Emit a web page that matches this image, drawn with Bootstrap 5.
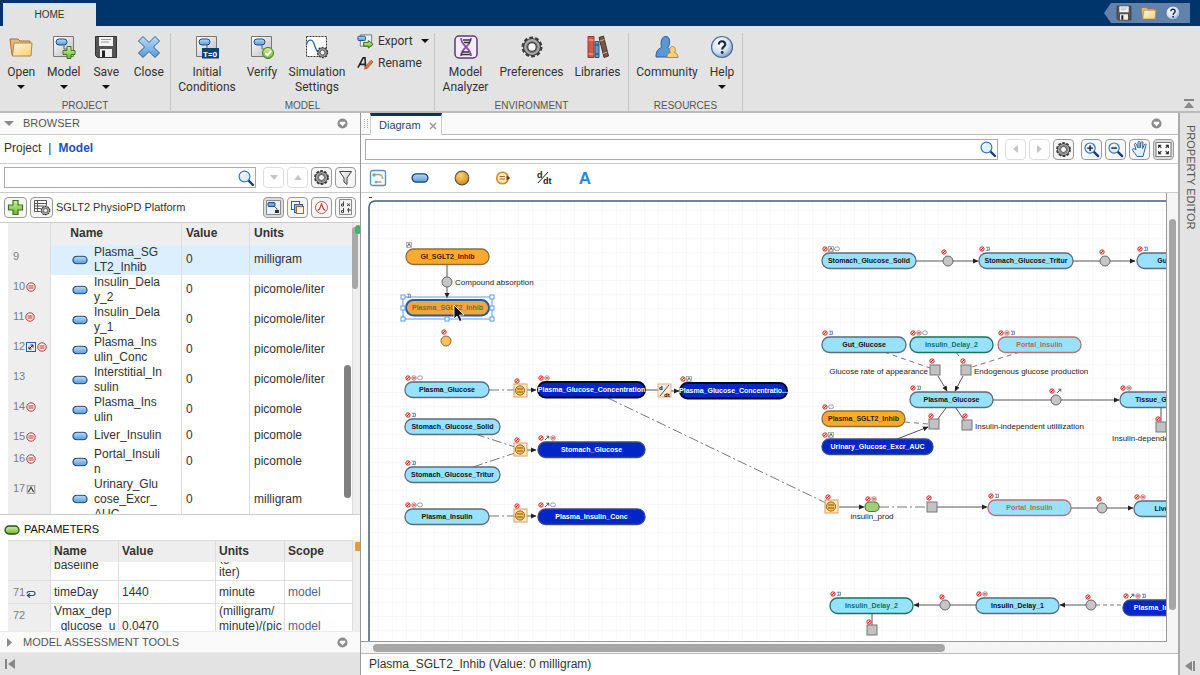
<!DOCTYPE html>
<html lang="en">
<head>
<meta charset="utf-8">
<meta name="viewport" content="width=device-width, initial-scale=1">
<title>Model Analyzer - SGLT2 PhysioPD Platform</title>
<link href="https://cdn.jsdelivr.net/npm/bootstrap@5.3.0/dist/css/bootstrap.min.css" rel="stylesheet">
<style>
:root{--line:#b4b4b4;--chrome:#e3e3e3}
body{font-family:"Liberation Sans",Arial,sans-serif;font-size:12px;line-height:15px;color:#333;background:#fff}
svg{display:block;flex:none}
button{font:inherit;color:inherit;background:none;border:0;padding:0}
a{color:inherit;text-decoration:none}
/* title bar */
.titlebar{height:26px;background:#00356b;padding:3px 10px 0 3px}
.hometab{width:93px;height:23px;background:var(--chrome);font-size:10px;line-height:19px}
.quick{height:20px;width:86px;background:#6183ab;clip-path:polygon(7px 0,100% 0,100% 100%,7px 100%,0 50%);padding-left:12px}
/* ribbon */
.ribbon{height:87px;background:var(--chrome);border-bottom:2px solid #bbb;font-family:Roboto,sans-serif}
.rgroup{border-right:1px solid #c4c4c4;margin-top:7px;height:78px}
.rgroup .tools{height:66px}
.rgroup .caption{font:10px/14px "Liberation Sans",sans-serif;color:#555;text-align:center;height:14px}
.rbtn{display:flex;flex-direction:column;align-items:center;padding-top:2px}
.rbtn svg.ico{margin-bottom:6px}
.caret{width:0;height:0;border:4px solid transparent;border-top-color:#111;border-bottom:0}
.rbtn .caret{margin-top:5px}
.rgroup .line{height:22px}
.rgroup .stack{margin-top:-3px}
/* left panel */
.browser{width:361px;border-right:1px solid #999}
.phead{height:22px;background:#fafafa;border-bottom:1px solid #ccc;font-size:11px;color:#555}
.prow{border-bottom:1px solid #ccc}
.btns{gap:3px}
.box{height:21px;border:1px solid #aaa;background:#fff}
.box input{border:0;outline:0;min-width:0;background:none;height:19px}
.sq{width:21px;height:21px;border:1px solid #999;border-radius:4px;background:#f6f6f6;display:flex;align-items:center;justify-content:center;flex:none}
.sq.w{width:23px}
.sq:disabled{border-color:#ddd;background:#fff}
.mtitle{font-size:11px}
.grid{table-layout:fixed;border-collapse:separate;border-spacing:0;width:345px}
.grid th{background:#eee;font-weight:700;height:22px;padding:0 4px;border-right:1px solid #ddd}
.grid td{padding:0 4px;border-right:1px solid #ddd;vertical-align:middle;word-break:break-all}
.grid td.num{background:#eee;color:#777f88;font-size:11px;vertical-align:top;padding:4px 0 0 5px;white-space:nowrap}
.grid td.num svg{display:inline-block;vertical-align:-2px;margin-left:1px}
.grid td.name{padding:0 0 0 21px;border-left:0}
.grid .pick td:not(.num){background:#dcefff}
.grid .pill{margin-right:6px}
.grid .nm{width:70px}
.species{flex:1 1 293px;min-height:0}
.gutter{width:8px;background:#eee}
.thumb{position:absolute;background:#808080;border-radius:4px}
.params{flex:0 0 91px}
.params td{border-bottom:1px solid #ddd}
.params td:not(.num),.params th{padding:0 0 0 3px}
.params .grid th{border-top:1px solid #ddd}
.params .body .grid{margin-top:-12px}
.params .scope{color:#56657f}
.foot{height:22px;background:var(--chrome)}
/* diagram panel */
.tabstrip{height:22px;background:#fafafa;border-bottom:1px solid #bbb}
.dtab{height:22px;border:1px solid #ccc;border-top:3px solid #00356b;border-bottom:0;background:#fff;color:#24466f;padding:0 4px 0 8px;font-size:11px}
.canvas{border-right:1px solid #999;border-bottom:1px solid #999}
.vbar{width:11px;background:#f5f5f5}
.hbar{height:12px;background:#f5f5f5;border-bottom:1px solid #bbb}
.vthumb,.hthumb{background:#a6a6a6;border-radius:4px}
.vthumb{width:7px;margin:26px 2px 32px 2px}
.hthumb{height:8px;margin:2px 0 0 12px;width:70%}
.side{width:22px;background:var(--chrome);border-left:2px solid #aaa;font-size:11px;color:#555}
.side .vert{writing-mode:vertical-rl}
#diagram text{font-family:"Liberation Sans",Arial,sans-serif}
#diagram .nt{font-size:7px;font-weight:700;text-anchor:middle}
#diagram .lt{font-size:8px;fill:#222}
</style>
</head>
<body class="d-flex flex-column vh-100 overflow-hidden">

<svg width="0" height="0" class="position-absolute" aria-hidden="true">
  <defs>
    <linearGradient id="gb" x1="0" y1="0" x2="0" y2="1"><stop offset="0" stop-color="#b9dcf8"/><stop offset="1" stop-color="#5a9ad6"/></linearGradient>
    <linearGradient id="gy" x1="0" y1="0" x2="1" y2="1"><stop offset="0" stop-color="#fff6d8"/><stop offset="1" stop-color="#f6cf74"/></linearGradient>
    <linearGradient id="gg" x1="0" y1="0" x2="1" y2="1"><stop offset="0" stop-color="#fff"/><stop offset="1" stop-color="#bcbcbc"/></linearGradient>
    <linearGradient id="gn" x1="0" y1="0" x2="0" y2="1"><stop offset="0" stop-color="#d2f29a"/><stop offset="1" stop-color="#6db33a"/></linearGradient>
    <radialGradient id="gh" cx=".4" cy=".35" r=".7"><stop offset="0" stop-color="#fff"/><stop offset=".6" stop-color="#cfe0f2"/><stop offset="1" stop-color="#6f93bd"/></radialGradient>
    <radialGradient id="go" cx=".4" cy=".3" r=".8"><stop offset="0" stop-color="#ffd36a"/><stop offset="1" stop-color="#c98216"/></radialGradient>
    <symbol id="folder" viewBox="0 0 24 24"><path d="M1 4h8l2 2h10v14H3z" fill="#e9b97a" stroke="#a8713a"/><path d="M5 8h18l-1 13H3.500z" fill="url(#gy)" stroke="#b98442"/></symbol>
    <symbol id="floppy" viewBox="0 0 24 24"><path d="M1.500 1.500h21v21h-19l-2-2z" fill="#555" stroke="#333"/><path d="M5 2h14v9H5z" fill="#f5f5f5"/><path d="M7 4.500h10M7 7h8" stroke="#999"/><path d="M6 14h12v8H6z" fill="#eee"/><path d="M8 15.500h3V22H8z" fill="#222"/></symbol>
    <symbol id="cross" viewBox="0 0 24 24"><path d="M6 1.500l6 6 6-6 4.500 4.500-6 6 6 6-4.500 4.500-6-6-6 6L1.500 18l6-6-6-6z" fill="url(#gb)" stroke="#2f5f95" stroke-linejoin="round"/></symbol>
    <symbol id="page" viewBox="0 0 24 24"><path d="M1.500 1.500h20v20h-20z" fill="url(#gg)" stroke="#777"/><path d="M12 9v5h3" fill="none" stroke="#666"/><rect x="4" y="4" width="11" height="6" rx="3" fill="url(#gb)" stroke="#1c4f8c"/></symbol>
    <symbol id="gear" viewBox="0 0 24 24"><g fill="none"><circle cx="12" cy="12" r="9" stroke="#3c3c3c" stroke-width="3" stroke-dasharray="3.600 2.055"/><circle cx="12" cy="12" r="7" stroke="#3c3c3c" stroke-width="4"/><circle cx="12" cy="12" r="6.700" stroke="#a8a8a8" stroke-width="2.400"/><circle cx="12" cy="12" r="4.300" fill="#f4f4f4" stroke="#3c3c3c" stroke-width="1.300"/></g></symbol>
    <symbol id="help" viewBox="0 0 24 24"><circle cx="12" cy="12" r="10.500" fill="url(#gh)" stroke="#506f94" stroke-width="1.200"/><path d="M8.800 9.500c0-4.500 6.600-4.200 6.400 0c0 2.300-3 2.200-3 5" fill="none" stroke="#1b2740" stroke-width="2.200"/><circle cx="12.200" cy="17.500" r="1.400" fill="#1b2740"/></symbol>
    <symbol id="lens" viewBox="0 0 18 18"><path d="M11 11l5 5" stroke="#173a70" stroke-width="2.400" stroke-linecap="round"/><circle cx="7.500" cy="7.500" r="5.400" fill="#dff0fb" stroke="#3973b5" stroke-width="1.200"/><path d="M4.500 7a3 3 0 0 1 3-3" fill="none" stroke="#fff" stroke-width="1.500"/></symbol>
    <symbol id="pill" viewBox="0 0 17 10"><rect x="1" y="1" width="15" height="8" rx="4" fill="url(#gb)" stroke="#1c4470" stroke-width="1.200"/></symbol>
    <symbol id="menu" viewBox="0 0 10 10"><circle cx="5" cy="5" r="4.600" fill="#8c8c8c"/><path d="M2.500 3.500h5v1.300L5 7.600 2.500 4.800z" fill="#fff"/></symbol>
    <symbol id="eq" viewBox="0 0 10 10"><circle cx="5" cy="5" r="4.200" fill="#fff5f2" stroke="#b5302c"/><path d="M2.500 4h5M2.500 6h5" stroke="#b5302c"/></symbol>
    <!-- badges above diagram blocks -->
    <symbol id="b-n" viewBox="0 0 6 6"><circle cx="3" cy="3" r="2.200" fill="#fbd5d2" stroke="#d8302b"/><path d="M1.500 4.500l3-3" stroke="#d8302b"/></symbol>
    <symbol id="b-e" viewBox="0 0 6 6"><circle cx="3" cy="3" r="2.300" fill="#fff" stroke="#c46a68" stroke-width=".8"/><path d="M1.500 2.400h3M1.500 3.700h3" stroke="#a03030" stroke-width=".7"/></symbol>
    <symbol id="b-r" viewBox="0 0 6 6"><path d="M1 1.200h3.500v3.200H1M2.700 1v4" fill="none" stroke="#6577ac" stroke-width=".8"/></symbol>
    <symbol id="b-l" viewBox="0 0 6 6"><rect x=".6" y="1" width="4.800" height="3.600" rx="1.600" fill="#fff" stroke="#7a86a8" stroke-width=".8"/></symbol>
    <symbol id="b-a" viewBox="0 0 6 6"><rect x=".5" y=".5" width="5" height="5" fill="#eee" stroke="#888" stroke-width=".6"/><path d="M1.300 4.600L3 1.500l1.700 3.100" fill="none" stroke="#444" stroke-width=".8"/></symbol>
    <symbol id="b-s" viewBox="0 0 6 6"><path d="M1 5l3.500-3.500M2.500 1.200h2.300v2.300" fill="none" stroke="#345" stroke-width=".9"/></symbol>
  </defs>
</svg>

<header class="titlebar d-flex justify-content-between">
  <button class="hometab">HOME</button>
  <div class="quick d-flex align-items-center gap-2">
    <button aria-label="Save"><svg width="16" height="16"><use href="#floppy"/></svg></button>
    <button aria-label="Open"><svg width="17" height="16"><use href="#folder"/></svg></button>
    <button aria-label="Help"><svg width="16" height="16"><use href="#help"/></svg></button>
  </div>
</header>

<nav class="ribbon d-flex" aria-label="Home tools">
  <section class="rgroup" style="flex:0 0 171px">
    <div class="tools d-flex">
      <button class="rbtn col-3"><svg class="ico" width="24" height="24"><use href="#folder"/></svg>Open<i class="caret"></i></button>
      <button class="rbtn col-3"><svg class="ico" width="24" height="24" viewBox="0 0 24 24"><use href="#page"/><path d="M15 11.500h4v4h4v4h-4v4h-4v-4h-4v-4h4z" fill="url(#gn)" stroke="#3d7a1e"/></svg>Model<i class="caret"></i></button>
      <button class="rbtn col-3"><svg class="ico" width="24" height="24"><use href="#floppy"/></svg>Save<i class="caret"></i></button>
      <button class="rbtn col-3"><svg class="ico" width="24" height="24"><use href="#cross"/></svg>Close</button>
    </div>
    <div class="caption">PROJECT</div>
  </section>
  <section class="rgroup" style="flex:0 0 264px">
    <div class="tools d-flex">
      <button class="rbtn" style="width:72px"><svg class="ico" width="24" height="24" viewBox="0 0 24 24"><use href="#page"/><rect x="7" y="13" width="17" height="10.500" fill="#0e4277"/><text x="8" y="21.500" font-size="8" font-weight="700" fill="#fff">T=0</text></svg>Initial<br>Conditions</button>
      <button class="rbtn" style="width:38px"><svg class="ico" width="24" height="24" viewBox="0 0 24 24"><use href="#page"/><circle cx="18" cy="18" r="5.500" fill="url(#gn)" stroke="#3d7a1e"/><path d="M15.300 18l2.200 2.300 3.500-4.500" fill="none" stroke="#fff" stroke-width="2"/></svg>Verify</button>
      <button class="rbtn" style="width:72px"><svg class="ico" width="24" height="24" viewBox="0 0 24 24"><path d="M1.500 1.500h20v20h-20z" fill="#fff" stroke="#333" stroke-dasharray="2 1"/><path d="M1.500 10c1-6 6-7 8 0s4 9 12 7" fill="none" stroke="#2a66a8" stroke-width="1.300"/><svg x="11" y="11" width="13" height="13"><use href="#gear"/></svg></svg>Simulation<br>Settings</button>
      <div class="ps-1 stack">
        <button class="line d-flex align-items-center"><svg width="17" height="16" viewBox="0 0 18 16" class="me-1"><path d="M3.500 1.500h12v12h-12z" fill="#eee" stroke="#777"/><rect x="1" y="3" width="8" height="4.500" rx="1" fill="url(#gb)" stroke="#1c4f8c"/><path d="M7 9.500h5v-2l5 4-5 4v-2H7z" fill="url(#gn)" stroke="#2f6a1a"/></svg>Export<i class="caret ms-2"></i></button>
        <button class="line d-flex align-items-center"><svg width="17" height="16" viewBox="0 0 18 16" class="me-1"><path d="M1 13L6.500 2.500h2L9 12.500M3.500 9.500H9" fill="none" stroke="#222" stroke-width="1.700"/><path d="M8 14.500l1-3 6-6.500 2 2-6 6.500z" fill="#e07a35" stroke="#8a4019" stroke-width=".7"/></svg>Rename</button>
      </div>
    </div>
    <div class="caption">MODEL</div>
  </section>
  <section class="rgroup" style="flex:0 0 194px">
    <div class="tools d-flex">
      <button class="rbtn" style="width:61px"><svg class="ico" width="24" height="24" viewBox="0 0 24 24"><rect x="1" y="1" width="22" height="22" rx="4" fill="#f4ecf8" stroke="#5d3a78" stroke-width="1.500"/><path d="M7 3c0 8 10 10 10 18M17 3c0 8-10 10-10 18" fill="none" stroke="#8c50a6" stroke-width="1.800"/><path d="M9 5h8M10 7.500h6M8 17h7M7 19.500h9" stroke="#333" stroke-width="1.300"/></svg>Model<br>Analyzer</button>
      <button class="rbtn" style="width:71px"><svg class="ico" width="24" height="24"><use href="#gear"/></svg>Preferences</button>
      <button class="rbtn" style="width:61px"><svg class="ico" width="24" height="24" viewBox="0 0 24 24"><path d="M2 1.500h6v21H2z" fill="#cf5a4b" stroke="#a13328"/><path d="M2.500 5h5M2.500 19h5" stroke="#f3b4a8"/><path d="M9 6.500h4v16H9z" fill="#5d9ac4" stroke="#285b82"/><path d="M9 10h4M9 19h4" stroke="#1d3e5c"/><path d="M13 2.500l4.500-1.500 5 20-4.500 1.500z" fill="#76564a" stroke="#4d352c"/><path d="M14 6l4.500-1.500M17 18.500l4.500-1.500" stroke="#c7a99c"/></svg>Libraries</button>
    </div>
    <div class="caption">ENVIRONMENT</div>
  </section>
  <section class="rgroup" style="flex:0 0 114px">
    <div class="tools d-flex">
      <button class="rbtn" style="width:76px"><svg class="ico" width="24" height="24" viewBox="0 0 24 24"><path d="M1 22c0-6 2-8 5.500-9.500C6 10 5 2 10.500 1.500S15 10 13 12.500C15 14 16 17 15.500 22z" fill="#5b97d3" stroke="#2a5c96"/><path d="M12 22.500c0-3 1-4 3.500-5-1.500-2-1-6 2-6s3.500 4 2 6c2.500 1 3.500 2 3.500 5z" fill="#fad27a" stroke="#b8842f"/></svg>Community</button>
      <button class="rbtn" style="width:34px"><svg class="ico" width="24" height="24"><use href="#help"/></svg>Help<i class="caret"></i></button>
    </div>
    <div class="caption">RESOURCES</div>
  </section>
  <button class="ms-auto align-self-end me-1" aria-label="Collapse ribbon"><svg width="14" height="12" viewBox="0 0 14 12"><path d="M2 1h10" stroke="#888" stroke-width="2"/><path d="M7 3l5 6H2z" fill="#888"/></svg></button>
</nav>

<div class="d-flex flex-grow-1" style="min-height:0">

  <aside class="browser d-flex flex-column flex-shrink-0">
    <div class="phead d-flex align-items-center px-1">
      <svg width="11" height="7" class="me-2"><path d="M0 1h10L5 6z" fill="#888"/></svg><span class="flex-grow-1">BROWSER</span><svg width="11" height="11" class="me-2"><use href="#menu"/></svg>
    </div>
    <div class="prow d-flex align-items-center px-1" style="flex:0 0 29px;gap:7px"><a href="#">Project</a><span>|</span><a href="#" class="fw-bold" style="color:#2550b8">Model</a></div>
    <div class="prow btns d-flex align-items-center px-1" style="flex:0 0 29px">
      <label class="box d-flex align-items-center flex-grow-1 me-1"><input class="flex-grow-1" aria-label="Search model"><svg width="18" height="18"><use href="#lens"/></svg></label>
      <button class="sq" disabled aria-label="Next"><svg width="8" height="5"><path d="M0 0h8L4 5z" fill="#c4c4c4"/></svg></button>
      <button class="sq" disabled aria-label="Previous"><svg width="8" height="5"><path d="M0 5h8L4 0z" fill="#c4c4c4"/></svg></button>
      <button class="sq" aria-label="Options"><svg width="17" height="17"><use href="#gear"/></svg></button>
      <button class="sq" aria-label="Filter"><svg width="15" height="16" viewBox="0 0 15 16"><path d="M1.500 1.500h12L9 8v6.500L6 12V8z" fill="url(#gg)" stroke="#444"/></svg></button>
    </div>
    <div class="prow btns d-flex align-items-center px-1" style="flex:0 0 30px">
      <button class="sq w" aria-label="Add"><svg width="17" height="17" viewBox="0 0 17 17"><path d="M6 1.500h5V6h4.500v5H11v4.500H6V11H1.500V6H6z" fill="url(#gn)" stroke="#39771b" stroke-width="1.200"/></svg></button>
      <button class="sq w" aria-label="Table settings"><svg width="18" height="17" viewBox="0 0 18 17"><path d="M1.500 1.500h12v11h-12zM1.500 4.500h12M1.500 7h12M1.500 9.500h12M4.500 1.500v11" fill="#fff" stroke="#555"/><svg x="7" y="6" width="11" height="11"><circle cx="5.500" cy="5.500" r="5" fill="#f6f6f6"/><use href="#gear"/></svg></svg></button>
      <span class="mtitle flex-grow-1">SGLT2 PhysioPD Platform</span>
      <button class="sq" style="background:#ddd" aria-label="Diagram view"><svg width="15" height="15" viewBox="0 0 15 15"><path d="M.5.500h14v14H.5z" fill="#eaf1f8" stroke="#888"/><path d="M8 6l3 3v2" fill="none" stroke="#555"/><rect x="2" y="2.500" width="7" height="4" rx="1" fill="#6fa8de" stroke="#1c4f8c"/><rect x="9" y="10" width="4" height="3" fill="#333"/></svg></button>
      <button class="sq" aria-label="Copies"><svg width="15" height="15" viewBox="0 0 15 15"><rect x="1.500" y="1.500" width="8" height="8" fill="#fff" stroke="#2b62a5"/><rect x="4.500" y="4.500" width="8" height="8" fill="#8fb7e2" stroke="#2b62a5"/><rect x="6.500" y="6.500" width="7" height="7" fill="#fff3dc" stroke="#a56b2b"/></svg></button>
      <button class="sq" aria-label="Plot"><svg width="15" height="15" viewBox="0 0 15 15"><circle cx="7.500" cy="7.500" r="6" fill="#fff" stroke="#b55a56"/><path d="M3.500 10.500l2-1.500 2-5 2 5 2 1.500" fill="none" stroke="#c03a36" stroke-width="1.200"/></svg></button>
      <button class="sq" aria-label="Equations"><svg width="15" height="16" viewBox="0 0 15 16"><path d="M1.500.500h12v15h-12z" fill="#f2f2f2" stroke="#888"/><path d="M5.500 2.500v4.500h-2v-2h2M9 4.500l3 2.500M12 4.500L9 7M5.500 9v4.500h-2v-2h2M9 11h4M10.500 9v4.500" fill="none" stroke="#444"/></svg></button>
    </div>

    <div class="species d-flex position-relative overflow-hidden ps-2 prow">
      <table class="grid align-self-start">
        <colgroup><col style="width:43px"><col style="width:131px"><col style="width:68px"><col style="width:103px"></colgroup>
        <thead><tr><th></th><th class="ps-3">&nbsp;Name</th><th>Value</th><th>Units</th></tr></thead>
        <tbody id="species"></tbody>
      </table>
      <div class="gutter flex-grow-1"></div>
      <i class="thumb" style="left:344px;top:142px;width:7px;height:133px"></i>
      <i class="thumb" style="left:352px;top:4px;width:6px;height:62px;background:#a8a8a8"></i>
      <i class="thumb" style="left:355px;top:2px;width:6px;height:9px;background:#3fb56c"></i>
    </div>

    <div class="d-flex align-items-center px-1" style="flex:0 0 25px;padding-top:4px;font-size:11px;color:#111">
      <svg width="16" height="10" viewBox="0 0 16 10"><rect x="1" y="1" width="14" height="8" rx="4" fill="url(#gn)" stroke="#2c4c1f" stroke-width="1.300"/></svg><span class="ms-1">PARAMETERS</span>
    </div>
    <div class="params d-flex position-relative overflow-hidden ps-2">
      <div class="d-flex flex-column">
        <table class="grid">
          <colgroup><col style="width:43px"><col style="width:68px"><col style="width:97px"><col style="width:69px"><col style="width:68px"></colgroup>
          <thead><tr><th></th><th>Name</th><th>Value</th><th>Units</th><th>Scope</th></tr></thead>
        </table>
        <div class="body overflow-hidden">
          <table class="grid">
            <colgroup><col style="width:43px"><col style="width:68px"><col style="width:97px"><col style="width:69px"><col style="width:68px"></colgroup>
            <tbody>
              <tr><td class="num"></td><td>baseline</td><td></td><td class="text-nowrap">(gram/decil<br>iter)</td><td></td></tr>
              <tr style="height:23px"><td class="num">71<svg width="10" height="8" viewBox="0 0 10 8"><path d="M3 1.500h4a2 2 0 0 1 0 4H2M4 3.500l-2.500 2L4 7.500M3 1.500a2 2 0 0 0-2 2" fill="none" stroke="#334a78" stroke-width="1.200"/></svg></td><td>timeDay</td><td>1440</td><td>minute</td><td class="scope">model</td></tr>
              <tr><td class="num">72</td><td class="text-nowrap overflow-hidden">Vmax_dep<br>_glucose_u<br>ptake</td><td>0.0470</td><td class="text-nowrap">(milligram/<br>minute)/(pic<br>omole)</td><td class="scope">model</td></tr>
            </tbody>
          </table>
        </div>
      </div>
      <div class="gutter flex-grow-1"></div>
      <i class="thumb" style="left:355px;top:2px;width:6px;height:9px;background:#f09a2c;border-radius:1px"></i>
    </div>
    <div class="phead d-flex align-items-center px-1 border-top border-secondary-subtle">
      <svg width="11" height="9" class="me-2"><path d="M3 0l5 4.500L3 9z" fill="#888"/></svg><span class="flex-grow-1">MODEL ASSESSMENT TOOLS</span><svg width="11" height="11" class="me-2"><use href="#menu"/></svg>
    </div>
    <div class="foot d-flex align-items-center ps-1"><button aria-label="Collapse browser"><svg width="12" height="10"><path d="M2 0v10" stroke="#888" stroke-width="2"/><path d="M11 0v10L4 5z" fill="#888"/></svg></button></div>
  </aside>

  <main class="d-flex flex-column flex-grow-1" style="min-width:0">
    <div class="tabstrip d-flex align-items-start">
      <svg width="9" height="20"><path d="M3.500 6v9M6.500 6v9" stroke="#aaa" stroke-dasharray="1 1"/></svg>
      <button class="dtab d-flex align-items-center">Diagram<svg width="8" height="8" class="ms-2"><path d="M1 1l6 6M7 1L1 7" stroke="#999" stroke-width="1.500"/></svg></button>
      <svg width="11" height="11" class="ms-auto align-self-center me-3"><use href="#menu"/></svg>
    </div>
    <div class="prow btns d-flex align-items-center px-1" style="flex:0 0 29px">
      <label class="box d-flex align-items-center flex-grow-1 me-1"><input class="flex-grow-1" aria-label="Search diagram"><svg width="18" height="18"><use href="#lens"/></svg></label>
      <button class="sq" disabled aria-label="Back"><svg width="5" height="8"><path d="M5 0v8L0 4z" fill="#c4c4c4"/></svg></button>
      <button class="sq" disabled aria-label="Forward"><svg width="5" height="8"><path d="M0 0v8l5-4z" fill="#c4c4c4"/></svg></button>
      <button class="sq me-1" aria-label="Diagram options"><svg width="17" height="17"><use href="#gear"/></svg></button>
      <button class="sq" aria-label="Zoom in"><svg width="17" height="17" viewBox="0 0 18 18"><use href="#lens"/><path d="M4.500 7.500h6M7.500 4.500v6" stroke="#123" stroke-width="1.500"/></svg></button>
      <button class="sq" aria-label="Zoom out"><svg width="17" height="17" viewBox="0 0 18 18"><use href="#lens"/><path d="M4.500 7.500h6" stroke="#123" stroke-width="1.500"/></svg></button>
      <button class="sq" aria-label="Pan"><svg width="18" height="18" viewBox="0 0 18 18"><path d="M6 16.500C4 13 1.500 11 1.500 9.500s2-1 3.500.5L3.500 4.500c0-1.500 1.500-1.500 2 0L7 8V2.500c0-1.500 2-1.500 2 0V8l1-5.500c.5-1.500 2-1 2 .5L11.500 8.500l2-4c1-1.200 2-.3 1.500 1l-2 7-1 4z" fill="#e4f1fc" stroke="#33608f"/></svg></button>
      <button class="sq" style="background:#ddd" aria-label="Fit to view"><svg width="17" height="15" viewBox="0 0 15 14"><path d="M.5.500h14v13H.5z" fill="#fff" stroke="#777"/><path d="M3 5.500V3h2.500M3 3l2.500 2.500M9.500 3H12v2.500M12 3L9.500 5.500M3 8.500V11h2.500M3 11l2.500-2.500M12 8.500V11H9.500M12 11L9.500 8.500" fill="none" stroke="#222"/></svg></button>
    </div>
    <div class="prow d-flex align-items-center px-2" style="flex:0 0 29px;gap:24px">
      <button aria-label="Compartment"><svg width="18" height="18" viewBox="0 0 18 18"><rect x="1.500" y="1.500" width="15" height="15" rx="2" fill="#f3f9fd" stroke="#5f8fb3" stroke-width="1.300"/><path d="M6 5.500h4a3.500 3.500 0 0 1 3.500 3.500v1M12.500 13H8" fill="none" stroke="#a9a78a" stroke-width="1.500"/><circle cx="5" cy="6" r="1.700" fill="#6da6d0"/><circle cx="7" cy="13" r="1.300" fill="#6da6d0"/></svg></button>
      <button aria-label="Species"><svg width="18" height="12" viewBox="0 0 17 10"><use href="#pill"/></svg></button>
      <button aria-label="Reaction"><svg width="18" height="18" viewBox="0 0 18 18"><circle cx="9" cy="9" r="6.800" fill="url(#go)" stroke="#555" stroke-width="1.200"/></svg></button>
      <button aria-label="Rule"><svg width="16" height="16" viewBox="0 0 16 16"><circle cx="7.500" cy="8" r="5.800" fill="#fdebc4" stroke="#cf8a2a" stroke-width="1.500"/><path d="M4.500 6.500h5.500M4.500 9h5.500" stroke="#a56a1c"/><path d="M11.500 5.500L15.500 8l-4 2.500z" fill="#5d4012"/></svg></button>
      <button aria-label="Rate rule"><svg width="18" height="18" viewBox="0 0 18 18"><path d="M3 14L13 3" stroke="#222"/><text x="2" y="8.500" font-size="9" font-weight="700" fill="#222">d</text><text x="8" y="15" font-size="9" font-weight="700" fill="#222">dt</text></svg></button>
      <button aria-label="Annotation" class="fw-bold" style="width:16px;font-size:17px;color:#1f8ae6">A</button>
    </div>
    <div class="d-flex flex-grow-1" style="min-height:0">
      <div class="canvas flex-grow-1 overflow-hidden" style="min-width:0">
        <svg id="diagram" width="100%" height="100%" role="img" aria-label="Model diagram"></svg>
      </div>
      <div class="vbar d-flex"><div class="vthumb flex-grow-1"></div></div>
    </div>
    <div class="hbar"><div class="hthumb"></div></div>
    <div class="d-flex align-items-center px-2" style="flex:0 0 21px">Plasma_SGLT2_Inhib (Value: 0 milligram)</div>
  </main>

  <aside class="side d-flex flex-column align-items-center justify-content-between pt-2 pb-1">
    <button class="vert mt-1">PROPERTY EDITOR</button>
    <button aria-label="Expand property editor"><svg width="12" height="10"><path d="M10 0v10" stroke="#888" stroke-width="2"/><path d="M8 0v10L1 5z" fill="#888"/></svg></button>
  </aside>
</div>

<script src="https://cdn.jsdelivr.net/npm/bootstrap@5.3.0/dist/js/bootstrap.bundle.min.js"></script>
<script>
// Species table: number, flag icons, name lines, units, row height
const eq = '<svg width="10" height="10"><use href="#eq"/></svg>';
const an = '<svg width="10" height="9"><use href="#b-a"/></svg>';
const sw = '<svg width="10" height="10" viewBox="0 0 10 10"><rect x=".5" y=".5" width="9" height="9" fill="#e6effa" stroke="#2b5ba0"/><path d="M3 7l4-4M4.500 3H7v2.500M3 4.500V7h2.500" fill="none" stroke="#222"/></svg>';
const species = [
  [9,'','Plasma_SG<br>LT2_Inhib','milligram',30],
  [10,eq,'Insulin_Dela<br>y_2','picomole/liter',30],
  [11,eq,'Insulin_Dela<br>y_1','picomole/liter',30],
  [12,sw+eq,'Plasma_Ins<br>ulin_Conc','picomole/liter',30],
  [13,'','Interstitial_In<br>sulin','picomole/liter',30],
  [14,eq,'Plasma_Ins<br>ulin','picomole',30],
  [15,eq,'Liver_Insulin','picomole',22],
  [16,eq,'Portal_Insuli<br>n','picomole',30],
  [17,an,'Urinary_Glu<br>cose_Excr_<br>AUC','milligram',45]];
document.getElementById('species').innerHTML = species.map((r, i) =>
  `<tr class="${i ? '' : 'pick'}" style="height:${r[4]}px"><td class="num">${r[0]}${r[1]}</td><td class="name"><div class="d-flex align-items-center"><svg class="pill" width="16" height="10" viewBox="0 0 17 10"><use href="#pill"/></svg><span class="nm text-nowrap">${r[2]}</span></div></td><td>0</td><td>${r[3]}</td></tr>`).join('');

// Diagram model, in window coordinates of the block canvas
const C = {cyan:['#99e2ff','#5c6b7a','#111'], navy:['#0026c8','#3c4a86','#fff'], dark:['#0026c8','#00072e','#fff'],
  amber:['#ffa92e','#86703f','#33220a'], sel:['#f3a63b','#2458a8','#6d6a5e'], green:['#99e2ff','#16745c','#0f7658'], rose:['#99e2ff','#bd6f6d','#b96558']};
const nodes = [
  [406,249,83,'GI_SGLT2_Inhib','amber','a'], [406,300,83,'Plasma_SGLT2_Inhib','sel','r'],
  [405,382,84,'Plasma_Glucose','cyan','nel'], [538,382,107,'Plasma_Glucose_Concentration','dark','ne'],
  [680,383,107,'Plasma_Glucose_Concentratio...','dark','na'],
  [405,419,95,'Stomach_Glucose_Solid','cyan','nr'], [405,467,95,'Stomach_Glucose_Tritur','cyan','nr'],
  [538,442,107,'Stomach_Glucose','navy','nse'], [405,509,84,'Plasma_Insulin','cyan','nel'],
  [538,509,107,'Plasma_Insulin_Conc','navy','nsl'],
  [822,253,94,'Stomach_Glucose_Solid','cyan','nal'], [979,253,94,'Stomach_Glucose_Tritur','cyan','nr'],
  [1137,253,84,'Gut_Glucose','cyan','nr'], [822,337,84,'Gut_Glucose','cyan','nr'],
  [910,337,83,'Insulin_Delay_2','green','nel'], [998,337,83,'Portal_Insulin','rose','ner'],
  [910,392,83,'Plasma_Glucose','cyan','nr'], [1120,392,84,'Tissue_Glucose','cyan','ne'],
  [822,411,83,'Plasma_SGLT2_Inhib','amber','nl'], [822,439,111,'Urinary_Glucose_Excr_AUC','navy','na'],
  [988,500,83,'Portal_Insulin','rose','nr'], [1134,501,84,'Liver_Insulin','cyan','ne'],
  [830,598,83,'Insulin_Delay_2','green','nr'], [976,598,83,'Insulin_Delay_1','cyan','ne'],
  [1123,600,94,'Plasma_Insulin_Conc','navy','nser']];
// x1 y1 x2 y2, arrow, dash
const D1 = '10 3 2 3', D2 = '5 4';
const edges = [[447,265,447,298,1],[489,390,514,390,0,D1],[527,390,536,390,1],[645,390,658,390],[671,391,679,391,1],
  [475,434,515,447,0,D1],[473,467,515,453,0,D1],[527,450,536,450,1],[489,516,514,516,0,D1],[527,516,536,516,1],
  [608,398,826,503,0,D1],[916,261,943,261],[952,261,978,261,1],[1073,261,1100,261],[1110,261,1135,261,1],
  [884,352,930,368,0,D2],[956,352,966,366,0,D2],[1020,352,972,367,0,D2],[938,376,947,391,1],[963,376,955,391,1],
  [993,400,1051,400],[1061,400,1119,400,1],[946,408,937,420],[956,408,964,420],[905,422,928,424,0,D2],[897,439,928,427,1],
  [1161,408,1161,422],[839,507,864,507,1],[879,507,926,507,0,D1],[937,507,987,507,1],[1071,508,1097,508],[1107,508,1133,508,1],
  [940,605,914,605,1],[949,605,976,605],[1086,605,1060,605,1],[1096,605,1123,605,0,'4 3'],[872,614,872,625]];
const circles = [[447,282],[948,261,944,252],[1105,261,1102,252],[1056,400,1052,391],[1102,508,1099,499],[945,605,942,597],[1091,605,1088,597]];
const squares = [[935,370,932,361],[966,370,963,361],[934,424,931,416],[967,425,965,416],[1161,427,1158,419],[932,507,929,498],[872,630,869,622]];
const rules = [[521,391],[521,450],[521,516],[832,507]];
const labels = [[455,285,'Compound absorption'],[928,374,'Glucose rate of appearance','end'],[974,374,'Endogenous glucose production'],
  [975,429,'Insulin-independent utililization'],[1112,441,'Insulin-dependent utilization'],[872,519,'insulin_prod','middle']];
const badge = (x, y, k) => `<use href="#b-${k}" x="${x - 3}" y="${y - 3}" width="6" height="6"/>`;

let s = `<defs><pattern id="gridp" width="14" height="14" patternUnits="userSpaceOnUse"><path d="M14 0H0V14" fill="none" stroke="#eff1f4"/></pattern>
<marker id="arr" markerUnits="userSpaceOnUse" markerWidth="6" markerHeight="6" refX="5" refY="3" orient="auto"><path d="M0 .500L5.500 3L0 5.500z" fill="#222"/></marker></defs>
<g transform="translate(-361 -193)"><rect x="369" y="201" width="3000" height="3000" rx="6" fill="url(#gridp)" stroke="#415d7d" stroke-width="1.500"/><path d="M369 197.500h3" stroke="#345"/>`;
for (const [a, b, c, d, arrow, dash] of edges)
  s += `<path d="M${a} ${b}L${c} ${d}" stroke="${dash ? '#777' : '#555'}" fill="none"${arrow ? ' marker-end="url(#arr)"' : ''}${dash ? ` stroke-dasharray="${dash}"` : ''}/>`;
for (const [x, y, w, t, c, b] of nodes) {
  const [fill, line, ink] = C[c];
  s += `<rect x="${x}" y="${y}" width="${w}" height="15.500" rx="7.500" fill="${fill}" stroke="${line}" stroke-width="${c === 'sel' || c === 'dark' ? 2 : 1.300}"/><text class="nt" x="${x + w / 2}" y="${y + 10}" fill="${ink}">${t}</text>`;
  [...b].forEach((k, i) => s += badge(x + 3 + i * 6, y - 4, k));
}
for (const [x, y, bx, by] of circles) s += `<circle cx="${x}" cy="${y}" r="5" fill="#c6c6c6" stroke="#666"/>` + (bx ? badge(bx, by, 'n') : '');
for (const [x, y, bx, by] of squares) s += `<rect x="${x - 5}" y="${y - 5}" width="10" height="10" fill="#c2c2c2" stroke="#777"/>` + badge(bx, by, 'n');
for (const [x, y] of rules) s += `<rect x="${x - 7}" y="${y - 7}" width="13" height="13" fill="#fdebd0" stroke="#d3a05a"/><circle cx="${x - 1}" cy="${y - .5}" r="4.600" fill="#ffc14d" stroke="#8c6420"/><path d="M${x - 4} ${y - 2}h6M${x - 4} ${y + 1}h6" stroke="#7a5516"/>` + badge(x - 4, y - 10, 'n');
for (const [x, y, t, a] of labels) s += `<text class="lt" x="${x}" y="${y}"${a ? ` text-anchor="${a}"` : ''}>${t}</text>`;
s += `<rect x="658" y="384" width="13" height="13" fill="#fdebd8" stroke="#d9b48c"/><path d="M660 396l9-11" stroke="#333" stroke-width=".8"/><text x="659" y="390" font-size="6" font-weight="700">d</text><text x="664" y="397" font-size="6" font-weight="700">dt</text>`;
s += `<circle cx="446" cy="341" r="5" fill="#fdbe5c" stroke="#7d6a45"/>` + badge(444, 332, 'n') + `<rect x="865" y="502" width="14" height="9.500" rx="4.500" fill="#9fd06f" stroke="#5a6f4a" stroke-width="1.200"/>` + badge(868, 499, 'n') + badge(874, 499, 'e') + badge(1059, 391, 's');
s += `<rect x="403" y="297" width="89" height="22" fill="none" stroke="#5b9bea"/>` + [[403,297],[492,297],[403,308],[492,308],[403,319],[447,319],[492,319]].map(([x, y]) => `<rect x="${x - 2}" y="${y - 2}" width="4" height="4" fill="#fff" stroke="#5b9bea"/>`).join('');
s += `<path d="M454 305v14l3-3 2.500 5.500 2.500-1-2.500-5.500h4.500z" fill="#111" stroke="#fff" stroke-width=".8"/></g>`;
document.getElementById('diagram').innerHTML = s;
</script>
</body>
</html>
